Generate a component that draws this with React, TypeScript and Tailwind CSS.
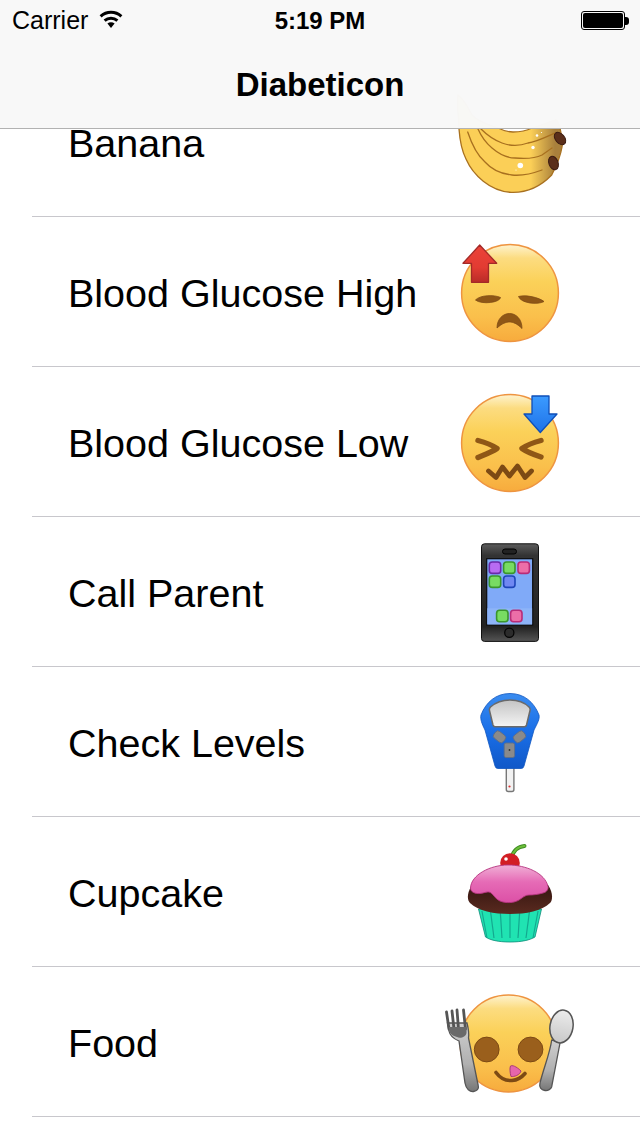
import type { ReactNode } from "react";

function Icon({ children }: { children: ReactNode }) {
  return (
    <svg viewBox="0 0 100 100" className="w-[100px] h-[100px] mt-[2px] overflow-visible shrink-0">
      {children}
    </svg>
  );
}

function FaceBase({ id, cx = 50, cy = 50 }: { id: string; cx?: number; cy?: number }) {
  return (
    <>
      <defs>
        <linearGradient id={id} x1="0" y1="0" x2="0" y2="1">
          <stop offset="0" stopColor="#fef3cf" />
          <stop offset="0.14" stopColor="#fcdc80" />
          <stop offset="0.38" stopColor="#fbd159" />
          <stop offset="0.75" stopColor="#fabf4b" />
          <stop offset="1" stopColor="#f7ab3d" />
        </linearGradient>
      </defs>
      <circle cx={cx} cy={cy} r="48.4" fill={`url(#${id})`} stroke="#ee9440" strokeWidth="1.5" />
    </>
  );
}

function BananaIcon() {
  return (
    <Icon>
      <defs>
        <linearGradient id="ban" x1="0" y1="0" x2="1" y2="0">
          <stop offset="0" stopColor="#fbcf57" />
          <stop offset="0.7" stopColor="#fbcf57" />
          <stop offset="0.93" stopColor="#a9803c" />
        </linearGradient>
      </defs>
      <path
        d="M-2 2C-4 12 -1 24 -1 36C0 50 2 58 6 66C13 82 30 98 51 99.3C68 100 82 92 91.7 82C97 72 101 60 102 54C103 48 101 40 100 35C99 30 97 26 95 27C88 29 80 33 72 35C66 38 58 39 53 39C46 39 42 37 38 35C30 32 20 30 12 22C8 14 4 6 -2 2Z"
        fill="url(#ban)"
        stroke="#a8701f"
        strokeWidth="1.3"
      />
      <path d="M7.7 39C12 52 18 63 25 69C33 78 42 81 52 82C62 83 74 80 82 77" fill="none" stroke="#a8701f" strokeWidth="1.3" strokeLinecap="round" />
      <path d="M18 36C22 45 26 50 32 55C39 61 47 65 55 65C66 66 76 65 82 62C85 60 89 57 92 55" fill="none" stroke="#a8701f" strokeWidth="1.3" strokeLinecap="round" />
      <path d="M21 36C28 43 34 47 42 50C50 53 60 53 68 50C76 49 86 44 95 40" fill="none" stroke="#a8701f" strokeWidth="1.3" strokeLinecap="round" />
      <ellipse cx="100" cy="45.5" rx="4.6" ry="7" transform="rotate(-40 100 45.5)" fill="#5a2e1a" stroke="#3a1a10" strokeWidth="1" />
      <ellipse cx="93.5" cy="70" rx="4.6" ry="7" transform="rotate(-20 93.5 70)" fill="#5a2e1a" stroke="#3a1a10" strokeWidth="1" />
      <circle cx="60.3" cy="72.5" r="2.8" fill="#fff" />
      <circle cx="73" cy="54.5" r="1.7" fill="#fff" />
      <circle cx="77" cy="42.5" r="1.3" fill="#fff" />
      <circle cx="81.5" cy="39.5" r="0.6" fill="#fff" />
      <circle cx="56" cy="77" r="0.6" fill="#fff" />
    </Icon>
  );
}

function HighIcon() {
  return (
    <Icon>
      <defs>
        <linearGradient id="red" x1="0" y1="0" x2="0" y2="1">
          <stop offset="0" stopColor="#ec4339" />
          <stop offset="0.6" stopColor="#e23b32" />
          <stop offset="1" stopColor="#b92c28" />
        </linearGradient>
      </defs>
      <FaceBase id="fh" />
      <path d="M15.5 57C20 52 34 51.5 40.5 54.5C40 59.5 22 62 15.5 57Z" fill="#8f5716" stroke="#7d4a14" strokeWidth="0.8" />
      <path d="M58.5 53.5C66 51.5 79 54.5 84 58.5C78 62 61 60.5 58.5 53.5Z" fill="#8f5716" stroke="#7d4a14" strokeWidth="0.8" />
      <path d="M37 85C37 76 43 70.5 49.5 70.5C56 70.5 62 76 62 85.5C57 80.5 53 79 49.5 79C46 79 42 80.5 37 85Z" fill="#8f5716" stroke="#7d4a14" strokeWidth="0.8" strokeLinejoin="round" />
      <path d="M19.7 2L3 20.3H11.5V39.3H28.5V20.3H36.7Z" fill="url(#red)" stroke="#a32a28" strokeWidth="1.3" strokeLinejoin="round" />
    </Icon>
  );
}

function LowIcon() {
  return (
    <Icon>
      <defs>
        <linearGradient id="blu" x1="0" y1="0" x2="0" y2="1">
          <stop offset="0" stopColor="#3b9bff" />
          <stop offset="1" stopColor="#1f72e8" />
        </linearGradient>
      </defs>
      <FaceBase id="fl" />
      <path d="M18 47.5C24 49 32 52 37 55.5C32 59 24 62 18 64.5" fill="none" stroke="#8f5716" strokeWidth="5.4" strokeLinecap="round" strokeLinejoin="round" />
      <path d="M81 47.5C75 49 67 52 62 55.5C67 59 75 62 81 64" fill="none" stroke="#8f5716" strokeWidth="5.4" strokeLinecap="round" strokeLinejoin="round" />
      <path d="M28.5 78L36 84.5L42.5 74L49.5 83L57.5 73L65 84.5L71.5 78" fill="none" stroke="#7d4a14" strokeWidth="4.8" strokeLinejoin="round" strokeLinecap="round" />
      <path d="M72 3H89V21H97L80.3 39.5L64 21H72Z" fill="url(#blu)" stroke="#0f4fb8" strokeWidth="1.3" strokeLinejoin="round" />
    </Icon>
  );
}

function AppTile({ x, y, fill, edge }: { x: number; y: number; fill: string; edge: string }) {
  return <rect x={x - 5.7} y={y - 5.7} width="11.4" height="11.4" rx="3" fill={fill} stroke={edge} strokeWidth="1.6" />;
}

function PhoneIcon() {
  return (
    <Icon>
      <defs>
        <linearGradient id="ph" x1="0" y1="0" x2="0" y2="1">
          <stop offset="0" stopColor="#5c5c5c" />
          <stop offset="0.12" stopColor="#333" />
          <stop offset="0.85" stopColor="#222" />
          <stop offset="1" stopColor="#555" />
        </linearGradient>
      </defs>
      <rect x="21.5" y="0.8" width="57" height="97.6" rx="3" fill="url(#ph)" stroke="#111" strokeWidth="1" />
      <rect x="26.7" y="15.7" width="46" height="66.3" fill="#80aaf8" stroke="#0c0c0c" strokeWidth="1.2" />
      <rect x="27.3" y="65.3" width="44.8" height="16.1" fill="#8db4f8" />
      <rect x="42.5" y="6" width="14" height="5" rx="2.5" fill="#222" stroke="#000" strokeWidth="1" />
      <circle cx="49.3" cy="89.7" r="4.6" fill="#2c2c2c" stroke="#050505" strokeWidth="1.3" />
      <AppTile x={35} y={24.7} fill="#b86cf2" edge="#6a2aa8" />
      <AppTile x={49.3} y={24.7} fill="#78dc62" edge="#3a962c" />
      <AppTile x={63.7} y={24.7} fill="#ec6ea8" edge="#b82c78" />
      <AppTile x={35} y={38.7} fill="#78dc62" edge="#3a962c" />
      <AppTile x={49.3} y={38.7} fill="#7088f2" edge="#1e46b8" />
      <AppTile x={42.3} y={73} fill="#78dc62" edge="#3a962c" />
      <AppTile x={56.3} y={73} fill="#ec6ea8" edge="#b82c78" />
    </Icon>
  );
}

function MeterIcon() {
  return (
    <Icon>
      <defs>
        <linearGradient id="me" x1="0" y1="0" x2="0" y2="1">
          <stop offset="0" stopColor="#3a8cf0" />
          <stop offset="0.5" stopColor="#1a6fe8" />
          <stop offset="1" stopColor="#1058c8" />
        </linearGradient>
        <linearGradient id="md" x1="0" y1="0" x2="0" y2="1">
          <stop offset="0" stopColor="#c4c4c4" />
          <stop offset="1" stopColor="#f4f4f4" />
        </linearGradient>
      </defs>
      <rect x="46.3" y="70" width="7.6" height="28.5" rx="2" fill="#f2f2f2" stroke="#777" strokeWidth="1.4" />
      <circle cx="49.5" cy="93.5" r="1.1" fill="#d83030" />
      <path d="M50 0.5C36 0.5 26 9 21 22C20 26 22 31 25 37L35 73Q35.5 75.5 38 75.5H61Q63.5 75.5 64 73L74 37C77 31 80 26 79 22C74 9 64 0.5 50 0.5Z" fill="url(#me)" stroke="#0f56c0" strokeWidth="0.8" />
      <path d="M50 7C58 7 65 10 69 14Q70.5 15.5 70 17.5L66.5 32Q66 33.7 64.5 33.7H35Q33.5 33.7 33 32L29.5 17.5Q29 15.5 30.5 14C35 10 42 7 50 7Z" fill="url(#md)" stroke="#6a6a6a" strokeWidth="1.5" strokeLinejoin="round" />
      <rect x="33.5" y="39.5" width="12" height="8.6" rx="3" transform="rotate(38 39.5 43.8)" fill="#8a8a8a" stroke="#5f6f88" strokeWidth="0.9" />
      <rect x="53.5" y="39.5" width="12" height="8.6" rx="3" transform="rotate(-38 59.5 43.8)" fill="#8a8a8a" stroke="#5f6f88" strokeWidth="0.9" />
      <rect x="44.2" y="50" width="10.4" height="14.5" rx="1.8" fill="#8a8a8a" stroke="#5f6f88" strokeWidth="0.9" />
      <circle cx="49.5" cy="57" r="0.9" fill="#333" />
    </Icon>
  );
}

function CupcakeIcon() {
  const pleats = [27, 34, 42, 50, 58, 66, 73];
  return (
    <Icon>
      <defs>
        <linearGradient id="fr" x1="0" y1="0" x2="0" y2="1">
          <stop offset="0" stopColor="#f0b0d6" />
          <stop offset="0.45" stopColor="#e66bb6" />
          <stop offset="1" stopColor="#dc50a6" />
        </linearGradient>
        <linearGradient id="ch" x1="0" y1="0" x2="0" y2="1">
          <stop offset="0" stopColor="#34160f" />
          <stop offset="1" stopColor="#5a2a20" />
        </linearGradient>
      </defs>
      <path d="M51.5 15C53 8 58 3.5 64.5 3" fill="none" stroke="#3f8c22" strokeWidth="4" strokeLinecap="round" />
      <path d="M51.5 15C53 8 58 3.5 64.5 3" fill="none" stroke="#6cbf3a" strokeWidth="2" strokeLinecap="round" />
      <circle cx="50" cy="20" r="9.8" fill="#d21f25" />
      <circle cx="46" cy="16" r="1.8" fill="#fff" />
      <path d="M18.5 66L25.5 94C30 97 38 99 50 99C62 99 70 97 75 94L81.5 66Z" fill="#20e3b2" stroke="#0d8a78" strokeWidth="0.8" />
      {pleats.map((x) => (
        <path key={x} d={`M${50 + (x - 50) * 1.22} 68L${x} 95`} stroke="#13a88f" strokeWidth="1.2" />
      ))}
      <path d="M11 44C7 50 7 57 10 60C18 68 34 71 50 71C66 71 82 68 90 60C93 57 93 49 88 42Z" fill="url(#ch)" />
      <path d="M48 22C30 22 11 32 10.5 45C10.5 49 15 51 20 50.5C24 50 27 48.5 29 49C33 50 35 56 40 58C46 60.5 54 60 59 57C63 54.5 65 52 69 52C73 52 78 51.5 83 50C87 49 88.5 46 88 43.5C85 30 66 22 48 22Z" fill="url(#fr)" stroke="#b5347f" strokeWidth="0.9" />
    </Icon>
  );
}

function FoodIcon() {
  return (
    <Icon>
      <defs>
        <linearGradient id="sp" x1="0" y1="0" x2="0" y2="1">
          <stop offset="0" stopColor="#ececec" />
          <stop offset="1" stopColor="#c8c8c8" />
        </linearGradient>
        <linearGradient id="hd" x1="0" y1="0" x2="0" y2="1">
          <stop offset="0" stopColor="#cfcfcf" />
          <stop offset="0.6" stopColor="#b0b0b0" />
          <stop offset="1" stopColor="#767676" />
        </linearGradient>
      </defs>
      <FaceBase id="ff" cx={48.5} cy={50.5} />
      <circle cx="26.7" cy="56.5" r="12.4" fill="#9a5f1c" stroke="#7d4a14" strokeWidth="1" />
      <circle cx="70.5" cy="56.5" r="12.4" fill="#9a5f1c" stroke="#7d4a14" strokeWidth="1" />
      <path d="M36 79.5C40 85 46 88 52 87.5C58 87 62 84 65 80.5" fill="none" stroke="#7d4a14" strokeWidth="3.6" strokeLinecap="round" />
      <path d="M50.5 73C52 72 56 73 61 78C60 82 54 84 51 83.5C50 80 49.5 75 50.5 73Z" fill="#e565ab" stroke="#a83a7a" strokeWidth="1" />
      {/* fork */}
      <path
        d="M-12.5 30L-11 38C-10 43 -6 46 -1 48L5 90C6 96 10 99 13.5 98.5C17 98 19 96 18.3 93L8.5 45C9 42 8.5 36 7 30Z"
        fill="url(#hd)"
        stroke="#555"
        strokeWidth="1.3"
      />
      <path d="M-13.5 19L-11 36M-8 18L-6 36M-3 17L-1.5 36M3.5 17L5.5 36" stroke="#555" strokeWidth="2.8" strokeLinecap="round" />
      <path d="M-11 34H6.5V40C6 44 0 46 -3 44C-7 43 -10 41 -11 37Z" fill="#6a6a6a" />
      {/* spoon */}
      <path d="M91.7 47C90 60 84 74 80 90C79 94 81 97 85 97.5C88 98 91 96 91.7 93.7L100 50Z" fill="url(#hd)" stroke="#555" strokeWidth="1.3" strokeLinejoin="round" />
      <ellipse cx="101.5" cy="33.5" rx="11.5" ry="16.5" transform="rotate(10 101.5 33.5)" fill="url(#sp)" stroke="#555" strokeWidth="1.5" />
    </Icon>
  );
}

const rows = [
  { name: "Banana", icon: <BananaIcon /> },
  { name: "Blood Glucose High", icon: <HighIcon /> },
  { name: "Blood Glucose Low", icon: <LowIcon /> },
  { name: "Call Parent", icon: <PhoneIcon /> },
  { name: "Check Levels", icon: <MeterIcon /> },
  { name: "Cupcake", icon: <CupcakeIcon /> },
  { name: "Food", icon: <FoodIcon /> },
];

export default function App() {
  return (
    <div className="relative w-[640px] h-[1136px] overflow-hidden bg-white text-black font-['Liberation_Sans',Arial,sans-serif]">
      {/* Translucent nav bar sits over the scrolled list */}
      <div className="absolute top-0 left-0 right-0 z-10 h-[129px] bg-[#f8f8f8]/[0.985] border-b border-[#b2b2b2]">
        <div className="relative flex items-center justify-between h-[41px] pl-[12px] pr-[11px]">
          <div className="flex items-center gap-[11px] text-[25px] leading-none">
            <span>Carrier</span>
            <svg viewBox="0 0 24 18" className="w-[24px] h-[18px] mb-[3px]">
              <path d="M12 18L8.4 13.6C10.4 11.9 13.6 11.9 15.6 13.6Z" fill="#000" />
              <path d="M5.6 10.6C9.2 7.4 14.8 7.4 18.4 10.6" fill="none" stroke="#000" strokeWidth="3" />
              <path d="M1.6 6.4C7.6 1 16.4 1 22.4 6.4" fill="none" stroke="#000" strokeWidth="3" />
            </svg>
          </div>
          <span className="absolute left-0 right-0 text-center text-[24px] font-bold leading-none">5:19 PM</span>
          <div className="flex items-center">
            <div className="w-[44px] h-[19px] rounded-[3px] border border-black p-[1px]">
              <div className="w-full h-full rounded-[2px] bg-black" />
            </div>
            <div className="w-[4px] h-[8px] bg-black rounded-r-[3px]" />
          </div>
        </div>
        <div className="flex items-center justify-center h-[87px] text-[33px] font-bold leading-none">Diabeticon</div>
      </div>

      <div className="pt-[67px] pl-[32px]">
        {rows.map((row) => (
          <div key={row.name} className="flex items-center justify-between h-[150px] pl-[36px] pr-[80px] border-b border-[#c8c7cc]">
            <span className="pt-[4px] text-[39.5px] leading-none">{row.name}</span>
            {row.icon}
          </div>
        ))}
      </div>
    </div>
  );
}
